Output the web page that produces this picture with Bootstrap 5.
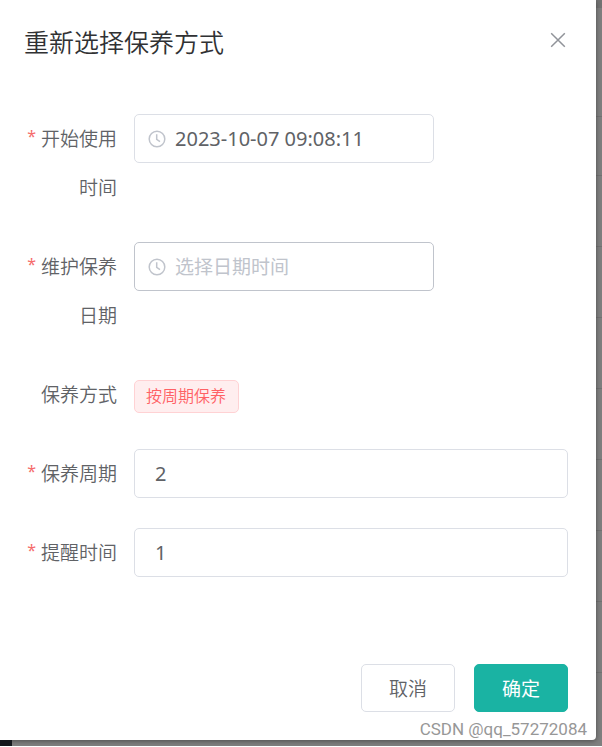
<!DOCTYPE html>
<html lang="zh-CN">
<head>
<meta charset="utf-8">
<meta name="viewport" content="width=device-width, initial-scale=1">
<title>重新选择保养方式</title>
<link href="https://cdn.jsdelivr.net/npm/bootstrap@5.3.0/dist/css/bootstrap.min.css" rel="stylesheet">
<style>
  body { font-family: "Noto Sans", "Noto Sans CJK SC", sans-serif; font-size: 19px; color: #606266; background: #fff; }
  .backdrop-area { background: #7f7f7f; padding-bottom: 6px; }
  .dialog-panel { border-radius: 0 0 4px 0; box-shadow: 0 1px 5px rgba(0,0,0,.4); z-index: 1; padding: 24px 28px 28px 24px; }
  .table-edge { width: 6px; }
  .table-edge div { height: 71px; border-bottom: 1px solid #727272; }
  .table-edge .edge-top { height: 8px; background: #737373; border: 0; }
  .table-edge .edge-head { height: 109px; }
  .table-edge .edge-first { height: 59px; }
  .sidebar-edge { left: 0; bottom: 0; width: 12px; height: 6px; background: #14181d; z-index: 2; }
  .dialog-title { font-family: "Noto Sans CJK SC", sans-serif; font-size: 25px; line-height: 34px; font-weight: 350; color: #303133; }
  .close-btn { width: 20px; height: 32px; color: #909399; }
  .form-rows { margin-top: 56px; gap: 30px; }
  .field-label { font-family: "Noto Sans CJK SC", sans-serif; font-weight: 350; width: 110px; padding-right: 17px; line-height: 49px; margin-top: -1px; padding-bottom: 1px; text-align: right; }
  .required::before { content: "*"; color: #f56c6c; font-family: "Noto Sans", sans-serif; font-size: 16px; font-weight: 400; line-height: 1; margin-right: 5px; vertical-align: 4px; }
  .field-box { border: 1px solid #dcdfe6; border-radius: 5px; height: 49px; }
  .field-date { width: 300px; padding-left: 13px; gap: 9px; }
  .field-date.hovered { border-color: #c0c4cc; }
  .field-date svg { color: #c0c4cc; }
  .form-control.plain { font-size: 20px; line-height: 30px; color: #606266; padding: 0; border: 0; background: none; box-shadow: none; border-radius: 0; }
  .form-control.plain::placeholder { font-family: "Noto Sans CJK SC", sans-serif; font-size: 19px; font-weight: 400; color: #c0c4cc; }
  .field-num { padding: 0 20px; }
  .mode-tag { font-family: "Noto Sans CJK SC", sans-serif; font-size: 16px; line-height: 29px; font-weight: 350; color: #ff6165; background: #ffeeef; border: 1px solid #ffd2d4; border-radius: 5px; padding: 0 12px 2px 11px; margin-top: 10px; }
  .dialog-actions { margin-top: 87px; gap: 19px; }
  .dialog-actions .btn { font-family: "Noto Sans CJK SC", sans-serif; font-size: 19px; line-height: 28px; font-weight: 350; padding: 9px 27px; border-radius: 5px; }
  .btn-cancel { color: #606266; background: #fff; border-color: #dcdfe6; }
  .btn-ok { color: #fff; background: #1ab3a3; border-color: #1ab3a3; }
  .dialog-actions .btn-ok { font-weight: 400; }
  .watermark { right: 15px; bottom: 6px; z-index: 2; font-family: Roboto, sans-serif; font-size: 17px; line-height: 22px; color: #979797; }
</style>
</head>
<body>
<div class="backdrop-area position-relative d-flex">
  <main class="dialog-panel bg-white flex-fill" role="dialog" aria-labelledby="dialogTitle">
    <header class="d-flex justify-content-between align-items-start">
      <h1 class="dialog-title mb-0" id="dialogTitle">重新选择保养方式</h1>
      <button type="button" class="close-btn btn p-0 border-0 d-flex align-items-center justify-content-center" aria-label="关闭">
        <svg width="16" height="16" viewBox="0 0 16 16" fill="none" stroke="currentColor" stroke-width="1.5"><path d="M1.2 1.2 14.8 14.8M14.8 1.2 1.2 14.8"/></svg>
      </button>
    </header>
    <form>
      <div class="form-rows d-flex flex-column">
        <div class="d-flex align-items-start">
          <label class="field-label required flex-shrink-0" for="startTime">开始使用时间</label>
          <div class="field-box field-date d-flex align-items-center">
            <svg class="flex-shrink-0" width="18" height="18" viewBox="0 0 18 18" fill="none" stroke="currentColor" stroke-width="1.5"><circle cx="9" cy="9" r="7.8"/><path d="M8.7 4.2V9.4L12 11.6"/></svg>
            <input class="form-control plain" id="startTime" type="text" value="2023-10-07 09:08:11">
          </div>
        </div>
        <div class="d-flex align-items-start">
          <label class="field-label required flex-shrink-0" for="careDate">维护保养日期</label>
          <div class="field-box field-date hovered d-flex align-items-center">
            <svg class="flex-shrink-0" width="18" height="18" viewBox="0 0 18 18" fill="none" stroke="currentColor" stroke-width="1.5"><circle cx="9" cy="9" r="7.8"/><path d="M8.7 4.2V9.4L12 11.6"/></svg>
            <input class="form-control plain" id="careDate" type="text" placeholder="选择日期时间">
          </div>
        </div>
        <div class="d-flex align-items-start">
          <span class="field-label flex-shrink-0">保养方式</span>
          <span class="mode-tag">按周期保养</span>
        </div>
        <div class="d-flex align-items-start">
          <label class="field-label required flex-shrink-0" for="cycle">保养周期</label>
          <div class="field-box field-num flex-fill d-flex align-items-center">
            <input class="form-control plain" id="cycle" type="text" value="2">
          </div>
        </div>
        <div class="d-flex align-items-start">
          <label class="field-label required flex-shrink-0" for="remind">提醒时间</label>
          <div class="field-box field-num flex-fill d-flex align-items-center">
            <input class="form-control plain" id="remind" type="text" value="1">
          </div>
        </div>
      </div>
      <div class="dialog-actions d-flex justify-content-end">
        <button type="button" class="btn btn-cancel">取消</button>
        <button type="submit" class="btn btn-ok">确定</button>
      </div>
    </form>
  </main>
  <div class="table-edge flex-shrink-0" aria-hidden="true">
    <div class="edge-top"></div>
    <div class="edge-head"></div>
    <div class="edge-first"></div>
    <div></div><div></div><div></div><div></div><div></div><div></div><div></div>
  </div>
  <div class="sidebar-edge position-absolute"></div>
  <div class="watermark position-absolute">CSDN @qq_57272084</div>
</div>
<script src="https://cdn.jsdelivr.net/npm/bootstrap@5.3.0/dist/js/bootstrap.bundle.min.js"></script>
</body>
</html>
